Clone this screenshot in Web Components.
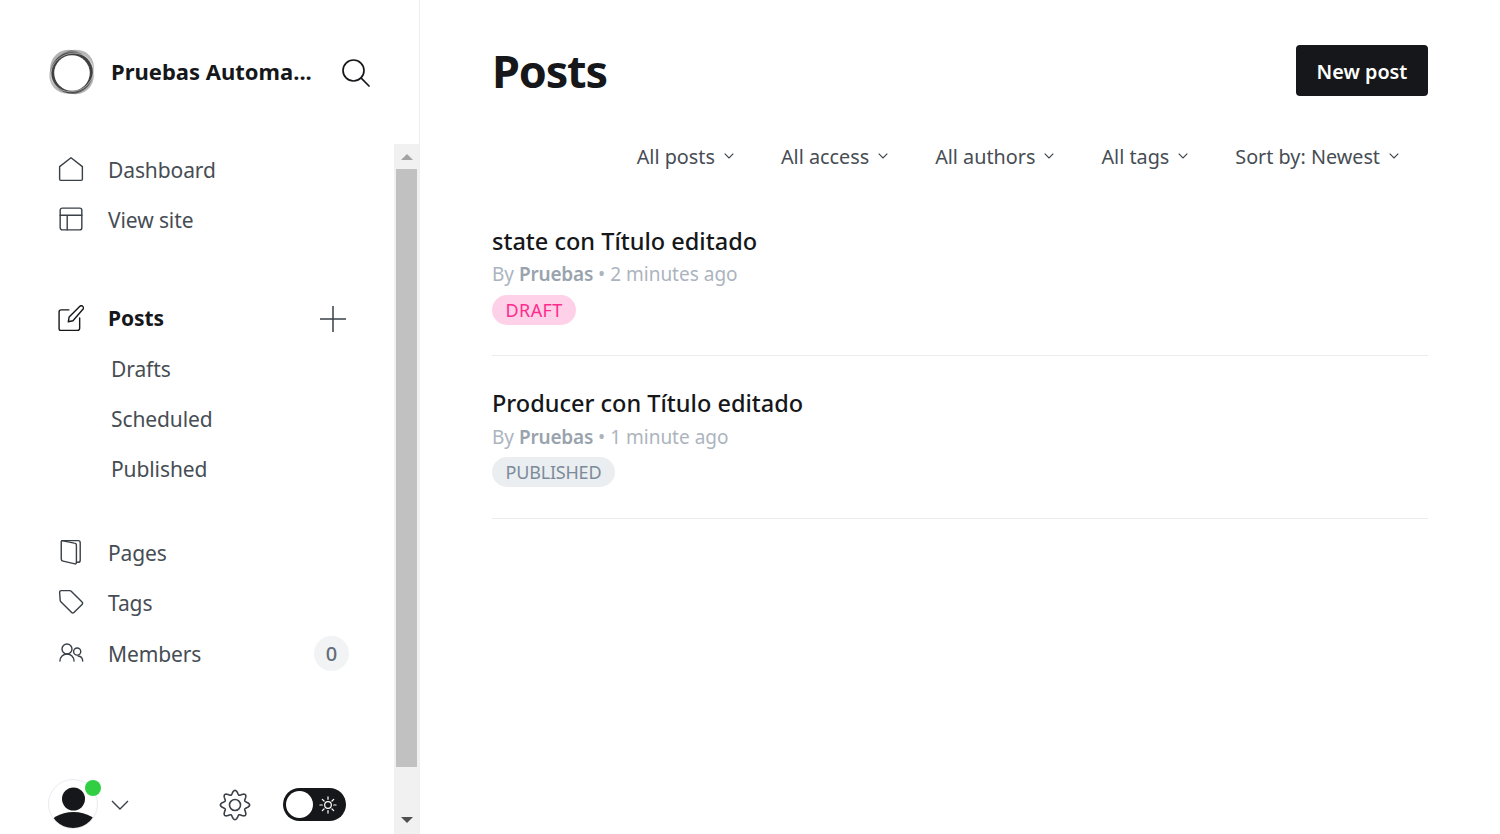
<!DOCTYPE html>
<html lang="en">
<head>
<meta charset="utf-8">
<title>Posts</title>
<style>
  html, body { margin: 0; height: 100%; overflow: hidden; background: #fff; }
  body { font-family: "Noto Sans", "Open Sans", sans-serif; color: #15171a; }
</style>
</head>
<body>
<admin-app>
  <admin-sidebar slot="sidebar">
    <nav-item icon="home" label="Dashboard"></nav-item>
    <nav-item icon="site" label="View site"></nav-item>
    <nav-item icon="edit" label="Posts" active plus style="margin-top:49px"></nav-item>
    <nav-sub label="Drafts"></nav-sub>
    <nav-sub label="Scheduled"></nav-sub>
    <nav-sub label="Published"></nav-sub>
    <nav-item icon="page" label="Pages" style="margin-top:34px"></nav-item>
    <nav-item icon="tag" label="Tags"></nav-item>
    <nav-item icon="members" label="Members" count="0" style="margin-top:1px"></nav-item>
  </admin-sidebar>
  <posts-view>
    <post-row title="state con Título editado" time="2 minutes ago" status="DRAFT"></post-row>
    <post-row title="Producer con Título editado" time="1 minute ago" status="PUBLISHED"></post-row>
  </posts-view>
</admin-app>

<script>
const ICONS = {
  home: '<path d="M1.500 21.500V9.800L12 1.600l10.500 8.200v11.700a1 1 0 0 1-1 1h-19a1 1 0 0 1-1-1z"/>',
  site: '<rect x="2" y="2" width="20" height="20" rx="2"/><path d="M2 8.500h20M8.500 8.500V22"/>',
  edit: '<path d="M10 4.500H3a2 2 0 0 0-2 2V22a1.500 1.500 0 0 0 1.500 1.500H18a2 2 0 0 0 2-2V12"/><path d="M9.500 15.500l.8-4.500L20.200 1.200a1.800 1.800 0 0 1 2.500 0l.3.3a1.800 1.800 0 0 1 0 2.500L13.800 14.500z"/>',
  page: '<path d="M3.500 1.500h15a2 2 0 0 1 2 2v16a2 2 0 0 1-2 2h-1.500"/><path d="M3.500 1.500l11.500 2.300a2 2 0 0 1 2 2V22a1 1 0 0 1-1.300 1l-11-2.600a2 2 0 0 1-1.700-2V3.500a2 2 0 0 1 .5-2z"/>',
  tag: '<path d="M1.500 3A1.500 1.500 0 0 1 3 1.500h7.800a2 2 0 0 1 1.400.6l10 10a1.500 1.500 0 0 1 0 2.100l-7.500 7.500a1.500 1.500 0 0 1-2.100 0l-10-10a2 2 0 0 1-.6-1.400z"/>',
  members: '<circle cx="8.300" cy="8.300" r="4.600"/><path d="M1.800 19.400a6.500 6.500 0 0 1 13 0"/><circle cx="17.700" cy="10.700" r="3.300"/><path d="M18.600 14.800a4.800 4.800 0 0 1 4.200 4.600"/>'
};

// rounded cog outline, 8 teeth as a radial wave
function gearPath() {
  const pts = [];
  for (let i = 0; i < 240; i++) {
    const a = i / 240 * Math.PI * 2;
    const r = 12.6 + 2 * Math.cos(a * 8);
    pts.push((16 + r * Math.sin(a)).toFixed(2) + ' ' + (16 - r * Math.cos(a)).toFixed(2));
  }
  return 'M' + pts.join('L') + 'Z';
}

// outer frame, sidebar on the left and the page on the right
class AdminApp extends HTMLElement {
  constructor() {
    super();
    this.attachShadow({ mode: 'open' });
    this.shadowRoot.innerHTML = `
      <style>
        :host { display: flex; width: 1500px; height: 834px; overflow: hidden; }
        ::slotted(admin-sidebar) { flex: 0 0 420px; }
        .main { flex: 1; min-width: 0; }
      </style>
      <slot name="sidebar"></slot>
      <div class="main"><slot></slot></div>
    `;
  }
}

class AdminSidebar extends HTMLElement {
  constructor() {
    super();
    this.attachShadow({ mode: 'open' });
    this.shadowRoot.innerHTML = `
      <style>
        :host {
          display: flex;
          flex-direction: column;
          box-sizing: border-box;
          height: 834px;
          border-right: 1px solid #eceef0;
        }
        .head {
          flex: 0 0 144px;
          display: flex;
          align-items: center;
          box-sizing: border-box;
          padding: 0 49px 0 48px;
        }
        .logo { flex: none; width: 48px; height: 48px; margin-right: 15px; }
        .name {
          flex: 1;
          font-size: 22px;
          line-height: 28px;
          margin-bottom: 2px;
          font-weight: 700;
          color: #15171a;
          white-space: nowrap;
        }
        .search { flex: none; width: 29px; height: 29px; fill: none; stroke: #15171a; stroke-width: 1.700; stroke-linecap: round; }
        .body { flex: 1; min-height: 0; display: flex; }
        .col { flex: 1; min-width: 0; display: flex; flex-direction: column; }
        .nav { flex: 1; padding-left: 58px; padding-right: 45px; }
        .foot {
          flex: 0 0 58px;
          display: flex;
          align-items: center;
          box-sizing: border-box;
          padding: 0 48px 1px 48px;
        }
        .avatar {
          position: relative;
          flex: none;
          width: 48px;
          height: 48px;
          margin-bottom: 1px;
          border: 1px solid #e9ebee;
          border-radius: 50%;
        }
        .avatar svg { display: block; width: 48px; height: 48px; border-radius: 50%; }
        .dot {
          position: absolute;
          top: 0;
          right: -4px;
          width: 16px;
          height: 16px;
          border-radius: 50%;
          background: #30cf43;
        }
        .chev { flex: none; width: 18px; height: 10px; margin: 1px 0 0 13px; fill: none; stroke: #394047; stroke-width: 1.400; }
        .gear { flex: none; width: 32px; height: 32px; margin-left: 90px; fill: none; stroke: #394047; stroke-width: 1.600; }
        .toggle {
          flex: none;
          display: flex;
          align-items: center;
          box-sizing: border-box;
          width: 63px;
          height: 33px;
          margin-left: 32px;
          padding: 3px;
          border-radius: 17px;
          background: #15171a;
        }
        .knob { flex: none; width: 27px; height: 27px; border-radius: 50%; background: #fff; }
        .sun { flex: none; width: 18px; height: 18px; margin-left: 6px; fill: none; stroke: #fff; stroke-width: 1.300; stroke-linecap: round; }
        .bar {
          flex: 0 0 25px;
          display: flex;
          flex-direction: column;
          align-items: center;
          background: #f1f1f1;
        }
        .bar i { display: block; flex: none; width: 0; height: 0; border-left: 6px solid transparent; border-right: 6px solid transparent; }
        .up { border-bottom: 6px solid #a3a3a3; margin: 10px 0 9px; }
        .down { border-top: 6px solid #505050; margin: 50px 0 0; }
        .thumb { flex: none; width: 21px; height: 598px; background: #c1c1c1; }
      </style>
      <div class="head">
        <svg class="logo" viewBox="0 0 48 48" fill="none">
          <ellipse cx="24" cy="23.500" rx="24" ry="20" fill="#000" opacity=".28" transform="rotate(-42 24 24)"/>
          <ellipse cx="24" cy="24" rx="23.500" ry="20.500" fill="#000" opacity=".3" transform="rotate(48 24 24)"/>
          <circle cx="24" cy="25" r="20.800" fill="#000" opacity=".5"/>
          <ellipse cx="24" cy="24.500" rx="21.500" ry="19" stroke="#fff" stroke-opacity=".6" stroke-width=".7" transform="rotate(-20 24 24)"/>
          <circle cx="24" cy="25" r="17.800" fill="#fff"/>
        </svg>
        <span class="name">Pruebas Automa...</span>
        <svg class="search" viewBox="0 0 29 29"><circle cx="12.500" cy="12.500" r="10.500"/><path d="M20.200 20.200l7.800 7.800"/></svg>
      </div>
      <div class="body">
        <div class="col">
          <div class="nav"><slot></slot></div>
          <div class="foot">
            <div class="avatar">
              <svg viewBox="0 0 48 48"><circle cx="24.500" cy="19" r="11.500" fill="#15171a"/><ellipse cx="24.500" cy="47" rx="25" ry="15" fill="#15171a"/></svg>
              <span class="dot"></span>
            </div>
            <svg class="chev" viewBox="0 0 18 10"><path d="M1 1l8 8 8-8"/></svg>
            <svg class="gear" viewBox="0 0 32 32"><circle cx="16" cy="16" r="5.500"/><path d="${gearPath()}" stroke-linejoin="round"/></svg>
            <div class="toggle">
              <span class="knob"></span>
              <svg class="sun" viewBox="0 0 19 19"><circle cx="9.500" cy="9.500" r="3.500"/><path d="M9.500 1v2.500M9.500 15.500V18M1 9.500h2.500M15.500 9.500H18M3.500 3.500l1.800 1.800M13.700 13.700l1.800 1.800M3.500 15.500l1.800-1.800M13.700 5.300l1.800-1.800"/></svg>
            </div>
          </div>
        </div>
        <div class="bar">
          <i class="up"></i>
          <div class="thumb"></div>
          <i class="down"></i>
        </div>
      </div>
    `;
  }
}

class NavItem extends HTMLElement {
  constructor() {
    super();
    this.attachShadow({ mode: 'open' });
  }
  connectedCallback() {
    const active = this.hasAttribute('active');
    const count = this.getAttribute('count');
    this.shadowRoot.innerHTML = `
      <style>
        :host { display: flex; align-items: center; height: 50px; }
        svg.ic { flex: none; width: 26px; height: 26px; fill: none; stroke: ${active ? '#15171a' : '#394047'}; stroke-width: 1.300; stroke-linejoin: round; stroke-linecap: round; }
        .label {
          flex: 1;
          margin: ${active ? 0 : '2px'} 0 0 24px;
          font-size: 21px;
          letter-spacing: -0.100px;
          color: ${active ? '#15171a' : '#464d54'};
          font-weight: ${active ? 700 : 400};
        }
        .plus { flex: none; width: 28px; height: 28px; margin: 1px 2px 0 0; fill: none; stroke: #394047; stroke-width: 1.500; }
        .count {
          flex: none;
          display: flex;
          align-items: center;
          justify-content: center;
          width: 35px;
          height: 35px;
          border-radius: 50%;
          background: #f1f3f4;
          color: #626d79;
          font-size: 20px;
          font-weight: 500;
        }
      </style>
      <svg class="ic" viewBox="0 0 24 24">${ICONS[this.getAttribute('icon')]}</svg>
      <span class="label">${this.getAttribute('label')}</span>
      ${this.hasAttribute('plus') ? '<svg class="plus" viewBox="0 0 28 28"><path d="M14 1v26M1 14h26"/></svg>' : ''}
      ${count !== null ? `<span class="count">${count}</span>` : ''}
    `;
  }
}

class NavSub extends HTMLElement {
  constructor() {
    super();
    this.attachShadow({ mode: 'open' });
  }
  connectedCallback() {
    this.shadowRoot.innerHTML = `
      <style>
        :host {
          display: flex;
          align-items: center;
          box-sizing: border-box;
          height: 50px;
          padding: 2px 0 0 53px;
          font-size: 21px;
          letter-spacing: -0.100px;
          color: #464d54;
        }
      </style>
      ${this.getAttribute('label')}
    `;
  }
}

class FilterMenu extends HTMLElement {
  constructor() {
    super();
    this.attachShadow({ mode: 'open' });
    this.shadowRoot.innerHTML = `
      <style>
        :host { display: flex; align-items: center; font-size: 19.800px; color: #464d54; white-space: nowrap; }
        svg { flex: none; width: 10px; height: 6px; margin-left: 9px; fill: none; stroke: #394047; stroke-width: 1.100; }
      </style>
      <slot></slot>
      <svg viewBox="0 0 10 6"><path d="M.7.7L5 5 9.300.7"/></svg>
    `;
  }
}

class PostsView extends HTMLElement {
  constructor() {
    super();
    this.attachShadow({ mode: 'open' });
    this.shadowRoot.innerHTML = `
      <style>
        :host { display: block; box-sizing: border-box; padding: 45px 72px 0 72px; }
        .top { display: flex; align-items: center; justify-content: space-between; height: 51px; }
        h1 {
          margin: 0;
          font-size: 45px;
          line-height: 51px;
          font-weight: 700;
          letter-spacing: -1.200px;
          color: #15171a;
        }
        button {
          flex: none;
          box-sizing: border-box;
          width: 132px;
          height: 51px;
          padding: 2px 0 0;
          border: 0;
          border-radius: 4px;
          background: #15171a;
          color: #fff;
          font: 600 19.800px "Noto Sans", "Open Sans", sans-serif;
        }
        .filters {
          display: flex;
          justify-content: flex-end;
          gap: 47px;
          height: 40px;
          margin-top: 40px;
          padding-right: 29px;
        }
        filter-menu { height: 40px; }
        .list { margin-top: 49px; }
      </style>
      <div class="top">
        <h1>Posts</h1>
        <button>New post</button>
      </div>
      <div class="filters">
        <filter-menu>All posts</filter-menu>
        <filter-menu>All access</filter-menu>
        <filter-menu>All authors</filter-menu>
        <filter-menu>All tags</filter-menu>
        <filter-menu>Sort by: Newest</filter-menu>
      </div>
      <div class="list"><slot></slot></div>
    `;
  }
}

class PostRow extends HTMLElement {
  constructor() {
    super();
    this.attachShadow({ mode: 'open' });
  }
  connectedCallback() {
    const draft = this.getAttribute('status') === 'DRAFT';
    this.shadowRoot.innerHTML = `
      <style>
        :host {
          display: block;
          box-sizing: border-box;
          height: 131px;
          margin-bottom: 31px;
          border-bottom: 1px solid #ebeef0;
        }
        :host(:last-child) { height: 132px; }
        .title { font-size: 23.500px; line-height: 32px; font-weight: 500; color: #15171a; white-space: nowrap; }
        .meta { margin-top: 2px; font-size: 19px; letter-spacing: 0; line-height: 30px; color: #abb4be; white-space: nowrap; }
        :host(:last-child) .meta { margin-top: 3px; }
        .meta b { font-weight: 600; letter-spacing: -0.200px; color: #99a3ad; }
        .badge {
          display: inline-block;
          margin-top: 6px;
          padding: 0 13.500px;
          height: 30px;
          line-height: 30px;
          border-radius: 15px;
          font-size: 18px;
          letter-spacing: ${draft ? '0.400px' : '-0.200px'};
          background: ${draft ? '#ffd1e8' : '#ebeef0'};
          color: ${draft ? '#fb2d8d' : '#7c8b9a'};
        }
        :host(:last-child) .badge { margin-top: 5px; }
      </style>
      <div class="title">${this.getAttribute('title')}</div>
      <div class="meta">By <b>Pruebas</b> • ${this.getAttribute('time')}</div>
      <span class="badge">${this.getAttribute('status')}</span>
    `;
  }
}

customElements.define('admin-app', AdminApp);
customElements.define('admin-sidebar', AdminSidebar);
customElements.define('nav-item', NavItem);
customElements.define('nav-sub', NavSub);
customElements.define('filter-menu', FilterMenu);
customElements.define('posts-view', PostsView);
customElements.define('post-row', PostRow);
</script>
</body>
</html>
